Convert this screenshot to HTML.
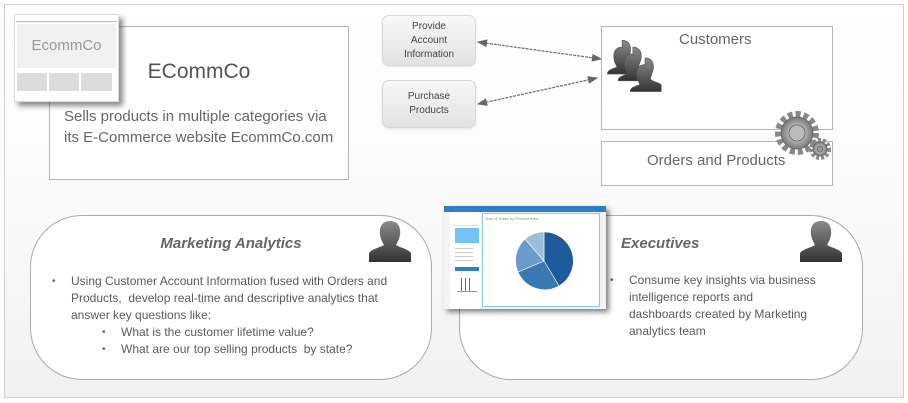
<!DOCTYPE html>
<html><head><meta charset="utf-8"><style>
*{margin:0;padding:0;box-sizing:border-box}
body{width:908px;height:403px;background:#fff;position:relative;overflow:hidden;font-family:"Liberation Sans",sans-serif;color:#5a5a5a}
.a{position:absolute}
#frame{left:4px;top:4px;width:900px;height:394px;border:1px solid #cfcfcf;background:linear-gradient(#fff 0%,#fafafa 50%,#f1f1f1 100%)}
.box{background:#fff;border:1px solid #b5b5b5}
.btn{border:1px solid #d8d8d8;border-radius:7px;background:linear-gradient(#f8f8f8,#e2e2e2);font-size:10px;color:#444;text-align:center;line-height:14px;display:flex;align-items:center;justify-content:center;box-shadow:0 1px 2px rgba(0,0,0,.1)}
.rbox{background:#fff;border:1px solid #aaa;border-radius:52px}
ul{list-style:none}
li{position:relative;font-size:12px;line-height:17px}
li:before{content:"•";position:absolute;left:-19px;color:#666;font-size:10px}
</style></head><body>
<div id="frame" class="a"></div>

<div class="a box" style="left:49px;top:26px;width:300px;height:154px"></div>
<div class="a" style="left:49px;top:60px;width:300px;text-align:center;font-size:21px;color:#555">ECommCo</div>
<div class="a" style="left:64px;top:106px;font-size:15px;line-height:21px;color:#666">Sells products in multiple categories via<br>its E-Commerce website EcommCo.com</div>

<div class="a" style="left:14px;top:14px;width:105px;height:88px;background:#fff;border:1px solid #ddd;box-shadow:4px 4px 5px rgba(0,0,0,.45)">
 <div class="a" style="left:1px;top:6px;width:101px;height:1px;background:#bbb"></div>
 <div class="a" style="left:2px;top:9px;width:99px;height:44px;background:#f0f0f0;font-size:15px;color:#999;text-align:center;line-height:44px">EcommCo</div>
 <div class="a" style="left:2px;top:58px;width:30px;height:18px;background:#dcdcdc"></div>
 <div class="a" style="left:34px;top:58px;width:30px;height:18px;background:#dcdcdc"></div>
 <div class="a" style="left:66px;top:58px;width:31px;height:18px;background:#dcdcdc"></div>
</div>

<div class="a btn" style="left:382px;top:15px;width:94px;height:51px">Provide<br>Account<br>Information</div>
<div class="a btn" style="left:382px;top:80px;width:94px;height:48px">Purchase<br>Products</div>

<svg class="a" style="left:0;top:0" width="908" height="403">
<defs><marker id="ar" markerWidth="8" markerHeight="8" refX="7" refY="4" orient="auto-start-reverse"><path d="M0,1 L8,4 L0,7z" fill="#666"/></marker></defs>
<line x1="478" y1="42" x2="601" y2="59" stroke="#777" stroke-width="1.3" stroke-dasharray="3 1" marker-start="url(#ar)" marker-end="url(#ar)"/>
<line x1="478" y1="104" x2="597" y2="78" stroke="#777" stroke-width="1.3" stroke-dasharray="3 1" marker-start="url(#ar)" marker-end="url(#ar)"/>
</svg>

<div class="a box" style="left:601px;top:26px;width:232px;height:104px"></div>
<div class="a" style="left:679px;top:31px;font-size:15px;color:#666">Customers</div>
<div class="a box" style="left:601px;top:141px;width:232px;height:45px"></div>
<div class="a" style="left:647px;top:152px;font-size:15px;color:#666">Orders and Products</div>

<svg class="a" style="left:606px;top:34px" width="70" height="72" viewBox="0 0 52 46">
<defs><linearGradient id="pg" x1="0" y1="0" x2="0" y2="1"><stop offset="0" stop-color="#8a8a8a"/><stop offset="1" stop-color="#333"/></linearGradient></defs>
<g fill="url(#pg)" stroke="#555" stroke-width=".5">
<path d="M12 1c5 0 7 4 6 9-1 3-2 5-2 7 2 2 6 2 8 4v5H1c0-3 4-4 7-5 0-2-2-3-2-6-1-5 1-9 6-9z"/>
<path d="M20 6c5 0 7 4 6 9-1 3-2 5-2 7 2 2 6 2 8 4v5H9c0-3 4-4 7-5 0-2-2-3-2-6-1-5 1-9 6-9z"/>
<path d="M29 14c5 0 7 4 6 9-1 3-2 5-2 7 2 2 6 2 8 4v5H18c0-3 4-4 7-5 0-2-2-3-2-6-1-5 1-9 6-9z"/>
</g></svg>

<svg class="a" style="left:772px;top:108px" width="62" height="56" viewBox="0 0 62 56">
<defs><radialGradient id="gg"><stop offset="0" stop-color="#eee"/><stop offset="1" stop-color="#777"/></radialGradient></defs>
<g fill="url(#gg)" stroke="#666" stroke-width=".8">
<circle cx="25" cy="25" r="19" stroke-dasharray="5 3" stroke-width="6" fill="none" stroke="#888"/>
<circle cx="25" cy="25" r="16"/>
<circle cx="25" cy="25" r="8" fill="#bbb"/>
<circle cx="48" cy="41" r="9" stroke-dasharray="3 2" stroke-width="4" fill="none" stroke="#888"/>
<circle cx="48" cy="41" r="7"/>
<circle cx="48" cy="41" r="3" fill="#999"/>
</g></svg>

<div class="a rbox" style="left:30px;top:215px;width:402px;height:165px"></div>
<div class="a" style="left:30px;top:235px;width:402px;text-align:center;font-size:15px;font-weight:bold;font-style:italic;color:#666">Marketing Analytics</div>
<ul class="a" style="left:71px;top:273px;width:345px">
<li>Using Customer Account Information fused with Orders and Products,&nbsp; develop real-time and descriptive analytics that answer key questions like:</li>
<li style="margin-left:50px">What is the customer lifetime value?</li>
<li style="margin-left:50px">What are our top selling products&nbsp; by state?</li>
</ul>

<div class="a rbox" style="left:459px;top:215px;width:404px;height:165px"></div>
<div class="a" style="left:621px;top:235px;font-size:15px;font-weight:bold;font-style:italic;color:#666">Executives</div>
<ul class="a" style="left:629px;top:272px;width:220px">
<li>Consume key insights via business<br>intelligence reports and<br>dashboards created by Marketing<br>analytics team</li>
</ul>

<svg class="a" style="left:366px;top:219px" width="48" height="45" viewBox="0 0 48 45">
<path d="M24 2c8 0 11 6 10 14-1 5-3 8-4 10 5 3 12 4 15 8v9H3v-9c3-4 10-5 15-8-1-2-3-5-4-10-1-8 2-14 10-14z" fill="url(#pg)"/></svg>
<svg class="a" style="left:797px;top:219px" width="48" height="45" viewBox="0 0 48 45">
<path d="M24 2c8 0 11 6 10 14-1 5-3 8-4 10 5 3 12 4 15 8v9H3v-9c3-4 10-5 15-8-1-2-3-5-4-10-1-8 2-14 10-14z" fill="url(#pg)"/></svg>

<div class="a" style="left:444px;top:206px;width:162px;height:103px;background:#fff;box-shadow:3px 3px 5px rgba(0,0,0,.5);overflow:hidden">
 <div class="a" style="left:0;top:0;width:162px;height:6px;background:#2f7fc4"></div>
 <div class="a" style="left:0;top:6px;width:6px;height:97px;background:#f4f4f4"></div>
 <div class="a" style="left:9px;top:10px;width:26px;height:10px;border-bottom:1px solid #ddd"></div>
 <div class="a" style="left:11px;top:22px;width:24px;height:15px;background:#74c3f5"></div>
 <div class="a" style="left:11px;top:39px;width:18px;height:18px;background:repeating-linear-gradient(#fff 0 3px,#ccc 3px 4px)"></div>
 <div class="a" style="left:11px;top:61px;width:24px;height:4px;background:#2f7fc4"></div>
 <div class="a" style="left:13px;top:72px;width:20px;height:14px;border-bottom:1px solid #999;background:linear-gradient(90deg,#fff 20%,#3a73b5 20%,#3a73b5 25%,#fff 25%,#fff 40%,#3a73b5 40%,#3a73b5 46%,#fff 46%,#fff 60%,#3a73b5 60%,#3a73b5 64%,#fff 64%)"></div>
 <div class="a" style="left:37px;top:6px;width:125px;height:97px;background:#f2f2f2"></div>
 <div class="a" style="left:38px;top:7px;width:118px;height:94px;background:#fff;border:1px solid #8cc7ee"></div>
 <div class="a" style="left:41px;top:10px;font-size:4px;color:#888">Sum of Sales by Product Area</div>
 <svg class="a" style="left:60px;top:23px" width="80" height="66" viewBox="0 0 80 66">
  <g transform="translate(40,32)" stroke="#fff" stroke-width=".6">
   <path d="M0,0 L0,-29 A29,29 0 0,1 15,25 Z" fill="#1f5a9a"/>
   <path d="M0,0 L15,25 A29,29 0 0,1 -26,11 Z" fill="#3a78b4"/>
   <path d="M0,0 L-26,11 A29,29 0 0,1 -19,-22 Z" fill="#6a9ccb"/>
   <path d="M0,0 L-19,-22 A29,29 0 0,1 0,-29 Z" fill="#9bbedd"/>
  </g></svg>
</div>
</body></html>
